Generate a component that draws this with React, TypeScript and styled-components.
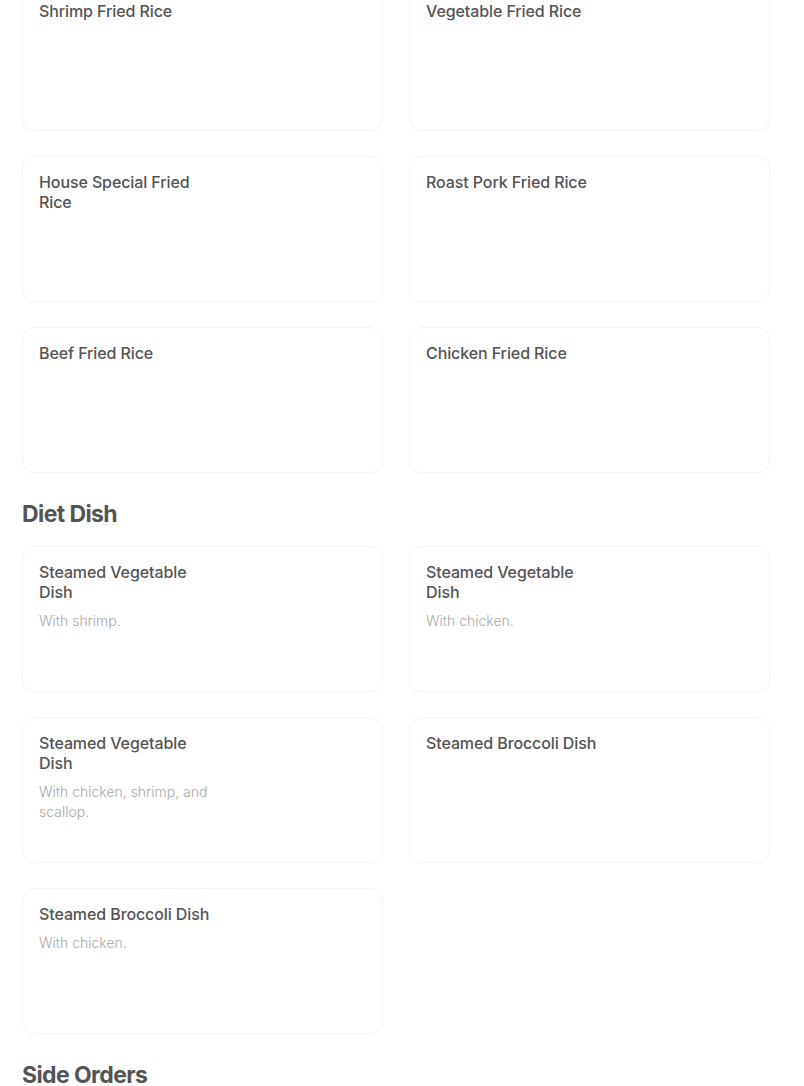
import styled, { createGlobalStyle } from "styled-components";

const GlobalStyle = createGlobalStyle`
  body {
    margin: 0;
    background: #ffffff;
    font-family: "Inter", "Roboto", sans-serif;
    overflow: hidden;
  }
`;

type Item = { name: string; desc?: string };

const sections: { title?: string; items: Item[] }[] = [
  {
    items: [
      { name: "Shrimp Fried Rice" },
      { name: "Vegetable Fried Rice" },
      { name: "House Special Fried Rice" },
      { name: "Roast Pork Fried Rice" },
      { name: "Beef Fried Rice" },
      { name: "Chicken Fried Rice" },
    ],
  },
  {
    title: "Diet Dish",
    items: [
      { name: "Steamed Vegetable Dish", desc: "With shrimp." },
      { name: "Steamed Vegetable Dish", desc: "With chicken." },
      { name: "Steamed Vegetable Dish", desc: "With chicken, shrimp, and scallop." },
      { name: "Steamed Broccoli Dish" },
      { name: "Steamed Broccoli Dish", desc: "With chicken." },
    ],
  },
  { title: "Side Orders", items: [] },
];

const App = () => {
  return (
    <>
      <GlobalStyle />
      <Page>
        {sections.map((s, i) => (
          <Section key={i}>
            {s.title && <Heading>{s.title}</Heading>}
            {s.items.length > 0 && (
              <Grid>
                {s.items.map((it, j) => (
                  <Card key={j}>
                    <TextCol>
                      <Name>{it.name}</Name>
                      {it.desc && <Desc>{it.desc}</Desc>}
                    </TextCol>
                  </Card>
                ))}
              </Grid>
            )}
          </Section>
        ))}
      </Page>
    </>
  );
};

const Page = styled.div`
  margin-top: -15px;
  padding: 0 34px 0 22px;
`;

const Section = styled.section`
  display: flex;
  flex-direction: column;
`;

const Heading = styled.h2`
  margin: 25px 0 16px;
  height: 32px;
  line-height: 32px;
  font-size: 23px;
  font-weight: 700;
  letter-spacing: -0.6px;
  color: #545454;
`;

const Grid = styled.div`
  display: grid;
  grid-template-columns: 1fr 1fr;
  column-gap: 26px;
  row-gap: 25px;
`;

const Card = styled.div`
  box-sizing: border-box;
  height: 146px;
  border: 1px solid #f4f4f4;
  border-radius: 13px;
  box-shadow: 0 1px 2px rgba(0, 0, 0, 0.02);
  padding: 15px 16px 16px 16px;
  display: flex;
`;

const TextCol = styled.div`
  width: 176px;
  display: flex;
  flex-direction: column;
  gap: 9px;
`;

const Name = styled.div`
  font-size: 16px;
  line-height: 20px;
  font-weight: 500;
  letter-spacing: -0.1px;
  color: #545454;
`;

const Desc = styled.div`
  font-size: 14px;
  line-height: 20px;
  font-weight: 300;
  color: #a8a8a8;
`;

export default App;
